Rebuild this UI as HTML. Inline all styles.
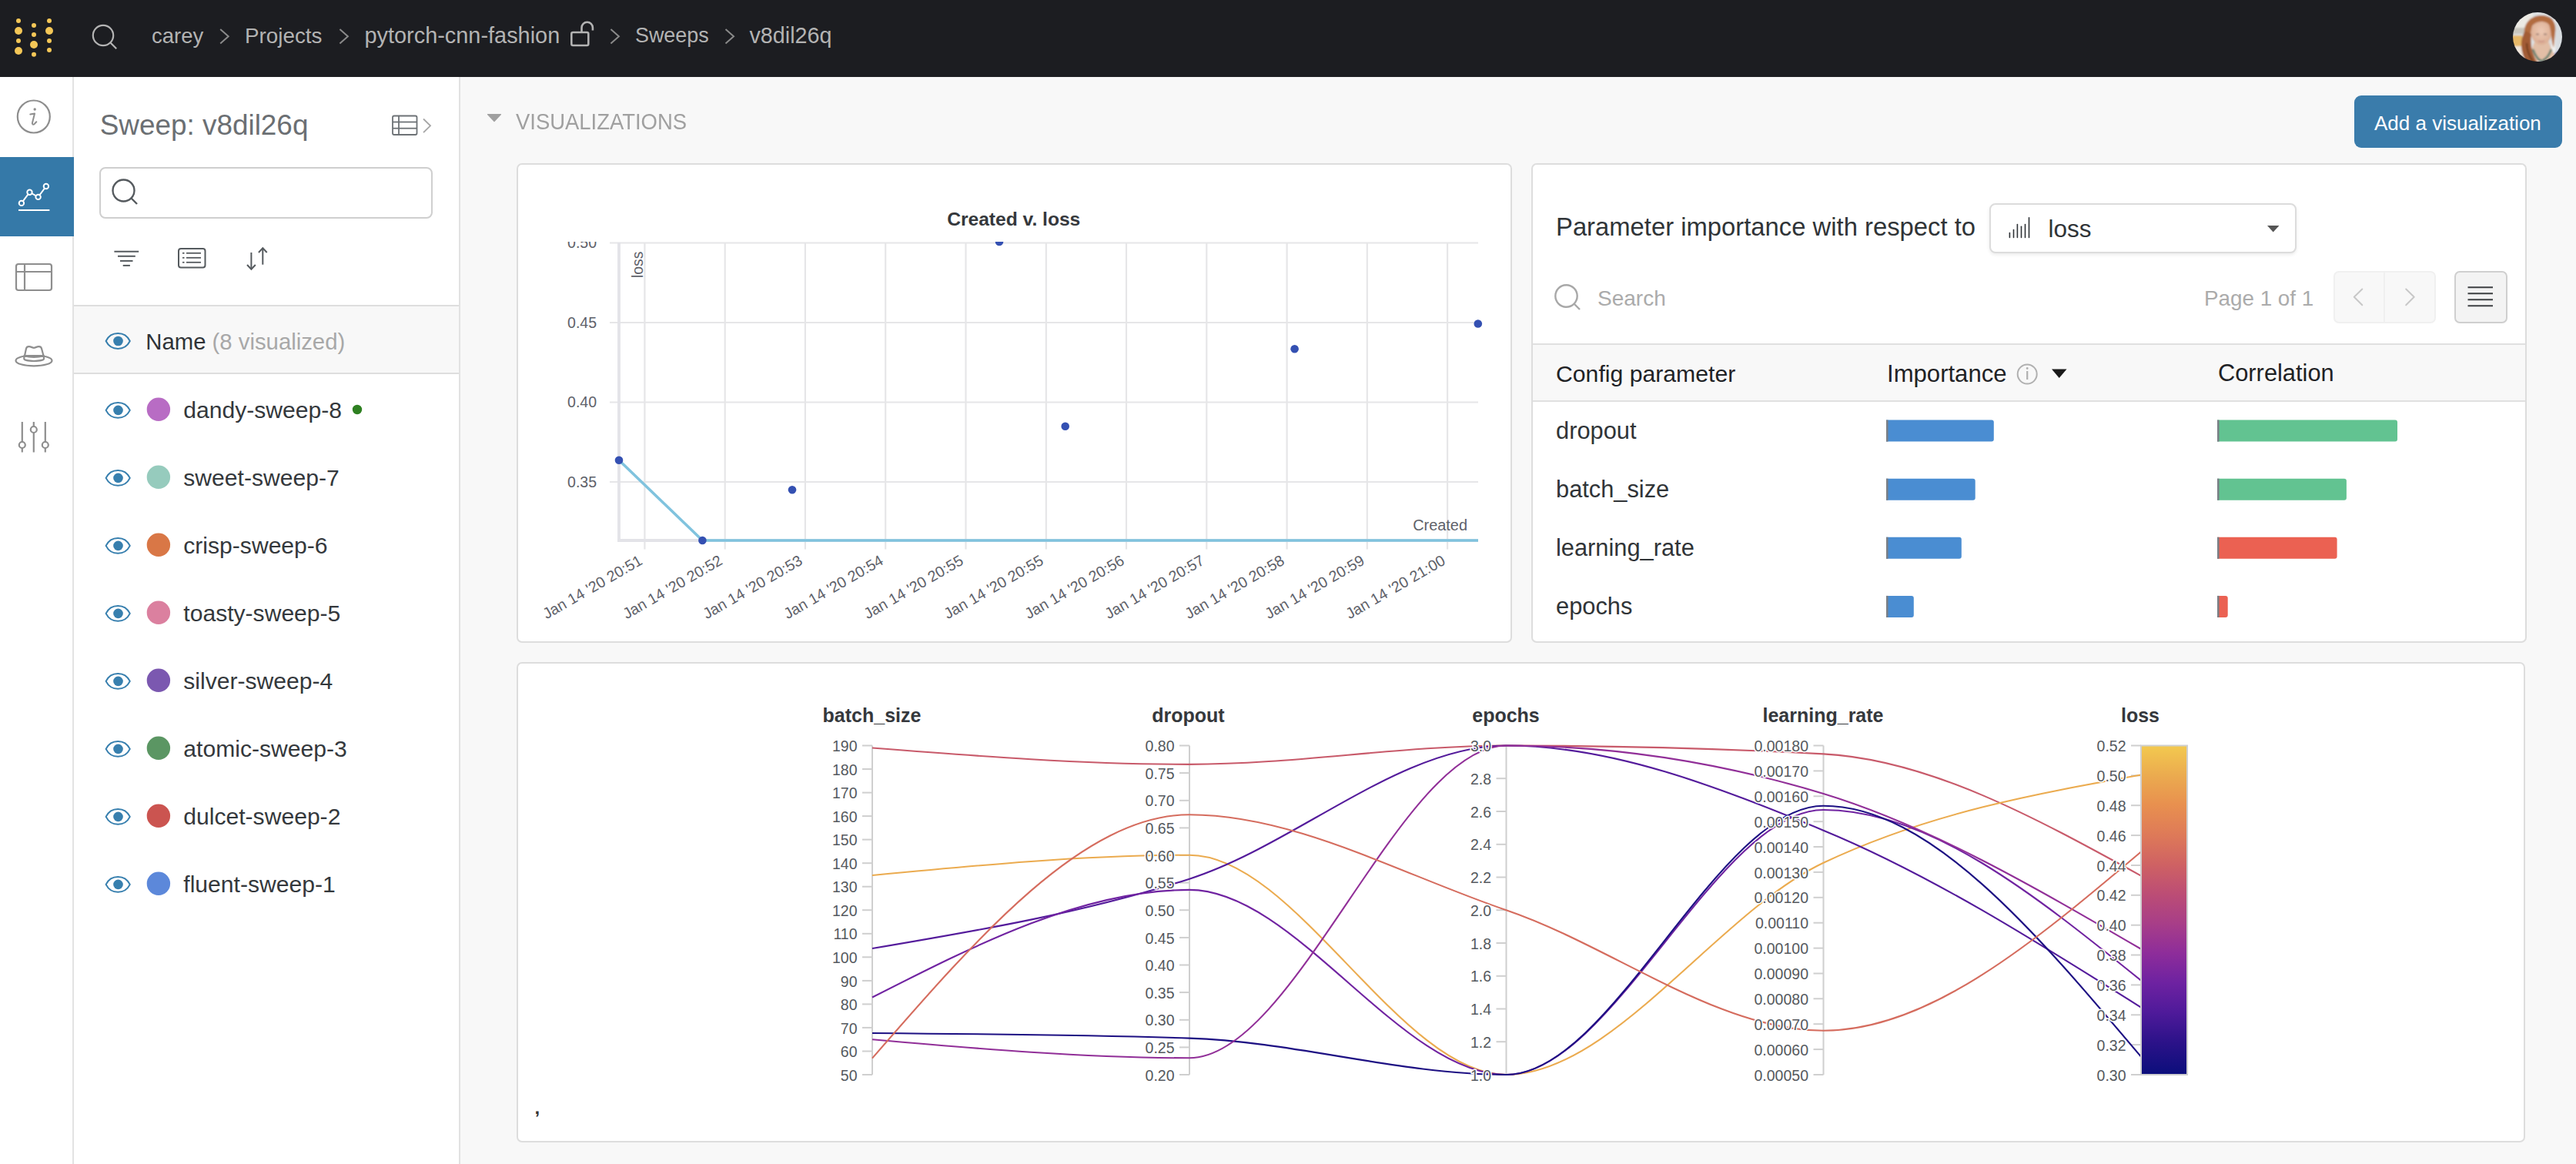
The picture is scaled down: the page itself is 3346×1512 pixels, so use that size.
<!DOCTYPE html><html><head><meta charset="utf-8"><title>Sweep v8dil26q</title><style>
html,body{margin:0;padding:0;}
body{width:3346px;height:1512px;position:relative;overflow:hidden;background:#f8f8f8;font-family:"Liberation Sans", sans-serif;}
.t{position:absolute;white-space:nowrap;line-height:1;}
.r{position:absolute;box-sizing:border-box;}
svg.r{overflow:visible;}
</style></head><body>
<div class="r" style="left:0px;top:0px;width:3346px;height:100px;background:#1c1d21;"></div>
<svg class="r" style="left:0px;top:0px;" width="100" height="100" viewBox="0 0 100 100"><circle cx="24" cy="27" r="3" fill="#f4c757"/><circle cx="24" cy="40" r="5" fill="#f4c757"/><circle cx="24" cy="53" r="3" fill="#f4c757"/><circle cx="24" cy="66" r="5" fill="#f4c757"/><circle cx="44" cy="33" r="3" fill="#f4c757"/><circle cx="44" cy="45" r="3" fill="#f4c757"/><circle cx="44" cy="58" r="5" fill="#f4c757"/><circle cx="44" cy="70.8" r="3" fill="#f4c757"/><circle cx="64" cy="27" r="3" fill="#f4c757"/><circle cx="64" cy="40" r="5" fill="#f4c757"/><circle cx="64" cy="53" r="3" fill="#f4c757"/><circle cx="64" cy="65" r="3" fill="#f4c757"/></svg>
<svg class="r" style="left:110px;top:20px;" width="60" height="60" viewBox="110 20 60 60"><circle cx="134" cy="46" r="13.2" fill="none" stroke="#b4b4b4" stroke-width="2.2"/><line x1="143.5" y1="55.5" x2="151.2" y2="63.2" stroke="#b4b4b4" stroke-width="2.2"/></svg>
<div class="t" style="left:197.0px;top:32.7px;font-size:27.5px;color:#b3b3b3;font-weight:normal;">carey</div>
<div class="t" style="left:318.0px;top:32.5px;font-size:27.8px;color:#b3b3b3;font-weight:normal;">Projects</div>
<div class="t" style="left:473.5px;top:31.5px;font-size:28.9px;color:#b3b3b3;font-weight:normal;">pytorch-cnn-fashion</div>
<div class="t" style="left:825.0px;top:33.2px;font-size:26.9px;color:#b3b3b3;font-weight:normal;">Sweeps</div>
<div class="t" style="left:973.5px;top:31.7px;font-size:28.7px;color:#b3b3b3;font-weight:normal;">v8dil26q</div>
<svg class="r" style="left:0px;top:0px;" width="1100" height="100" viewBox="0 0 1100 100"><polyline points="286.2,38 296.7,47.3 286.2,56.6" fill="none" stroke="#8a8a8a" stroke-width="2"/><polyline points="441.4,38 451.9,47.3 441.4,56.6" fill="none" stroke="#8a8a8a" stroke-width="2"/><polyline points="793.4,38 803.9,47.3 793.4,56.6" fill="none" stroke="#8a8a8a" stroke-width="2"/><polyline points="942.5,38 953.0,47.3 942.5,56.6" fill="none" stroke="#8a8a8a" stroke-width="2"/></svg>
<svg class="r" style="left:730px;top:20px;" width="50" height="50" viewBox="730 20 50 50"><rect x="742.3" y="42" width="22" height="17" rx="2" fill="none" stroke="#b3b3b3" stroke-width="2.6"/><path d="M755.5,42 V36 A7.2,7.2 0 0 1 769.9,36 V39.5" fill="none" stroke="#b3b3b3" stroke-width="2.6"/></svg>
<svg class="r" style="left:3264px;top:16px" width="64" height="64" viewBox="0 0 64 64">
<defs><clipPath id="av"><circle cx="32" cy="32" r="32"/></clipPath>
<filter id="bl" x="-10%" y="-10%" width="120%" height="120%"><feGaussianBlur stdDeviation="1.1"/></filter>
<radialGradient id="face" cx="0.5" cy="0.45" r="0.55"><stop offset="0" stop-color="#ecc9b4"/><stop offset="1" stop-color="#dcae94"/></radialGradient></defs>
<g clip-path="url(#av)"><g filter="url(#bl)">
<rect x="-4" y="-4" width="72" height="72" fill="#dfe2e4"/>
<rect x="-4" y="-4" width="30" height="30" fill="#eceae4"/>
<rect x="-4" y="20" width="20" height="8" fill="#c9c6bd"/>
<rect x="-4" y="30" width="16" height="18" fill="#e6b868"/>
<rect x="-4" y="44" width="20" height="24" fill="#efe6dc"/>
<rect x="48" y="-4" width="20" height="72" fill="#d9dde0"/>
<rect x="50" y="10" width="5" height="50" fill="#f2f2f0"/>
<path d="M20,64 C24,52 26,40 30,36 L46,36 C48,44 52,52 60,64 Z" fill="#e2bea6"/>
<path d="M54,54 L64,46 L64,64 L54,64 Z" fill="#2a3a9a"/>
<path d="M18,56 L24,64 L16,64 Z" fill="#2a3a9a"/>
<ellipse cx="37" cy="26" rx="13.5" ry="16" fill="url(#face)"/>
<path d="M15,30 C13,14 24,4 37,4 C50,4 57,12 55,26 L53,46 C50,40 50,22 47,16 C42,10 30,11 25,18 C23,24 23,30 23,36 Z" fill="#b26c40"/>
<path d="M16,24 C8,36 10,52 18,66 L32,66 C26,56 22,44 24,28 Z" fill="#a25c34"/>
<path d="M18,40 C18,50 22,58 26,64" fill="none" stroke="#6e3a1e" stroke-width="2"/>
<path d="M26,48 C29,56 33,62 37,63 C42,62 47,56 50,48" fill="none" stroke="#5e7e6e" stroke-width="2.6"/>
<path d="M30,28.5 L34,28.5 M40,28.5 L44,28.5" stroke="#8a7068" stroke-width="1.3"/>
<path d="M33,37 C35,38.5 39,38.5 41,37" fill="none" stroke="#c48a80" stroke-width="1.2"/>
</g></g></svg>
<div class="r" style="left:0px;top:100px;width:96px;height:1412px;background:#fff;border-right:2px solid #e2e2e2;"></div>
<div class="r" style="left:0px;top:204px;width:96px;height:103px;background:#3579a8;"></div>
<svg class="r" style="left:0px;top:100px;" width="96" height="600" viewBox="0 100 96 600">
<circle cx="43.8" cy="151.5" r="21" fill="none" stroke="#8e8e8e" stroke-width="2.2"/>
<circle cx="45.2" cy="142" r="1.7" fill="#8e8e8e"/>
<path d="M39.3,148.6 L45,147.4 L42,159.5 C41.4,162 43.2,162.3 44.8,160.9 L47.3,158.2" fill="none" stroke="#8e8e8e" stroke-width="2" stroke-linejoin="round" stroke-linecap="round"/>
<polyline points="27.9,263.9 38.5,249.7 49.6,255.9 59.9,242" fill="none" stroke="#fff" stroke-width="2"/>
<circle cx="27.9" cy="263.9" r="3.2" fill="#3579a8" stroke="#fff" stroke-width="2"/>
<circle cx="38.5" cy="249.7" r="3.2" fill="#3579a8" stroke="#fff" stroke-width="2"/>
<circle cx="49.6" cy="255.9" r="3.2" fill="#3579a8" stroke="#fff" stroke-width="2"/>
<circle cx="59.9" cy="242" r="3.2" fill="#3579a8" stroke="#fff" stroke-width="2"/>
<line x1="24" y1="273" x2="64.4" y2="273" stroke="#fff" stroke-width="2.2"/>
<rect x="21" y="343" width="46" height="34" rx="3" fill="none" stroke="#8e8e8e" stroke-width="2.2"/>
<line x1="21" y1="353" x2="67" y2="353" stroke="#8e8e8e" stroke-width="2.2"/>
<line x1="32" y1="343" x2="32" y2="377" stroke="#8e8e8e" stroke-width="2.2"/>
<ellipse cx="44" cy="468.4" rx="23.5" ry="6.9" fill="none" stroke="#8e8e8e" stroke-width="2.2"/>
<path d="M32,462 L34,452.8 C34.5,450.8 35.5,450.2 37.5,450.2 C40.5,450.2 42,451.8 44,451.8 C46,451.8 47.5,450.2 50.5,450.2 C52.5,450.2 53.5,450.8 54,452.8 L56.5,462 Z" fill="#fff" stroke="#8e8e8e" stroke-width="2.2" stroke-linejoin="round"/>
<path d="M31.3,462.3 C39,464.3 49,464.3 57,462.3 L57,466 C57,467.8 50,469 44,469 C38,469 31.3,467.8 31.3,466 Z" fill="#fff" stroke="#8e8e8e" stroke-width="2.2" stroke-linejoin="round"/>
<line x1="28.8" y1="548" x2="28.8" y2="574" stroke="#8e8e8e" stroke-width="2.2"/>
<line x1="28.8" y1="582" x2="28.8" y2="587.5" stroke="#8e8e8e" stroke-width="2.2"/>
<circle cx="28.8" cy="578" r="4" fill="none" stroke="#8e8e8e" stroke-width="2.2"/>
<line x1="43.8" y1="548" x2="43.8" y2="554" stroke="#8e8e8e" stroke-width="2.2"/>
<line x1="43.8" y1="562" x2="43.8" y2="587.5" stroke="#8e8e8e" stroke-width="2.2"/>
<circle cx="43.8" cy="558" r="4" fill="none" stroke="#8e8e8e" stroke-width="2.2"/>
<line x1="58.8" y1="548" x2="58.8" y2="574" stroke="#8e8e8e" stroke-width="2.2"/>
<line x1="58.8" y1="582" x2="58.8" y2="587.5" stroke="#8e8e8e" stroke-width="2.2"/>
<circle cx="58.8" cy="578" r="4" fill="none" stroke="#8e8e8e" stroke-width="2.2"/>
</svg>
<div class="r" style="left:96px;top:100px;width:502px;height:1412px;background:#fff;border-right:2px solid #e2e2e2;"></div>
<div class="t" style="left:129.7px;top:145.3px;font-size:36.9px;color:#6b6f73;font-weight:normal;">Sweep: v8dil26q</div>
<svg class="r" style="left:500px;top:140px;" width="70" height="45" viewBox="500 140 70 45">
<rect x="510" y="150.5" width="31.5" height="24.5" rx="2" fill="none" stroke="#6d7276" stroke-width="1.8"/>
<line x1="510" y1="158.5" x2="541.5" y2="158.5" stroke="#6d7276" stroke-width="1.8"/>
<line x1="510" y1="166.7" x2="541.5" y2="166.7" stroke="#6d7276" stroke-width="1.8"/>
<line x1="518" y1="150.5" x2="518" y2="175" stroke="#6d7276" stroke-width="1.8"/>
<polyline points="550,154.5 559,163.3 550,172.1" fill="none" stroke="#a5a5a5" stroke-width="1.8"/>
</svg>
<div class="r" style="left:129px;top:217px;width:433px;height:67px;background:#fff;border:2.5px solid #cfcfcf;border-radius:8px;"></div>
<svg class="r" style="left:130px;top:220px;" width="420" height="140" viewBox="130 220 420 140">
<circle cx="160.5" cy="247.5" r="14" fill="none" stroke="#555a5e" stroke-width="2.4"/>
<line x1="170.5" y1="257.5" x2="178" y2="265" stroke="#555a5e" stroke-width="2.4"/>
<line x1="148.4" y1="326.8" x2="180.2" y2="326.8" stroke="#555a5e" stroke-width="2"/>
<line x1="153" y1="332.8" x2="175.8" y2="332.8" stroke="#555a5e" stroke-width="2"/>
<line x1="156" y1="338.9" x2="172.5" y2="338.9" stroke="#555a5e" stroke-width="2"/>
<line x1="159.7" y1="344.9" x2="168.9" y2="344.9" stroke="#555a5e" stroke-width="2"/>
<rect x="232" y="323" width="34.5" height="24.5" rx="3" fill="none" stroke="#555a5e" stroke-width="2"/>
<line x1="237" y1="328.8" x2="239.5" y2="328.8" stroke="#555a5e" stroke-width="1.8"/>
<line x1="242" y1="328.8" x2="261" y2="328.8" stroke="#555a5e" stroke-width="1.8"/>
<line x1="237" y1="334.8" x2="239.5" y2="334.8" stroke="#555a5e" stroke-width="1.8"/>
<line x1="242" y1="334.8" x2="261" y2="334.8" stroke="#555a5e" stroke-width="1.8"/>
<line x1="237" y1="340.8" x2="239.5" y2="340.8" stroke="#555a5e" stroke-width="1.8"/>
<line x1="242" y1="340.8" x2="261" y2="340.8" stroke="#555a5e" stroke-width="1.8"/>
<line x1="326.4" y1="328" x2="326.4" y2="349.5" stroke="#555a5e" stroke-width="2"/>
<polyline points="321,344 326.4,349.7 331.8,344" fill="none" stroke="#555a5e" stroke-width="2"/>
<line x1="341.3" y1="322.3" x2="341.3" y2="343.7" stroke="#555a5e" stroke-width="2"/>
<polyline points="335.9,328 341.3,322.3 346.7,328" fill="none" stroke="#555a5e" stroke-width="2"/>
</svg>
<div class="r" style="left:96px;top:396px;width:500px;height:90px;background:#f8f8f8;border-top:2px solid #dedede;border-bottom:2px solid #dedede;"></div>
<div class="t" style="left:238.3px;top:518.3px;font-size:30.1px;color:#34383c;font-weight:normal;">dandy-sweep-8</div>
<div class="t" style="left:238.3px;top:606.3px;font-size:30.1px;color:#34383c;font-weight:normal;">sweet-sweep-7</div>
<div class="t" style="left:238.3px;top:694.3px;font-size:30.1px;color:#34383c;font-weight:normal;">crisp-sweep-6</div>
<div class="t" style="left:238.3px;top:782.3px;font-size:30.1px;color:#34383c;font-weight:normal;">toasty-sweep-5</div>
<div class="t" style="left:238.3px;top:870.3px;font-size:30.1px;color:#34383c;font-weight:normal;">silver-sweep-4</div>
<div class="t" style="left:238.3px;top:958.3px;font-size:30.1px;color:#34383c;font-weight:normal;">atomic-sweep-3</div>
<div class="t" style="left:238.3px;top:1046.3px;font-size:30.1px;color:#34383c;font-weight:normal;">dulcet-sweep-2</div>
<div class="t" style="left:238.3px;top:1134.3px;font-size:30.1px;color:#34383c;font-weight:normal;">fluent-sweep-1</div>
<svg class="r" style="left:96px;top:400px;" width="500" height="800" viewBox="96 400 500 800"><path d="M137.6,443 C144.2,429.8 162.2,429.8 168.79999999999998,443 C162.2,456.2 144.2,456.2 137.6,443 Z" fill="none" stroke="#377fae" stroke-width="2" stroke-linejoin="round"/><circle cx="153.5" cy="443" r="6.3" fill="#377fae"/><path d="M137.6,532.9 C144.2,519.6999999999999 162.2,519.6999999999999 168.79999999999998,532.9 C162.2,546.1 144.2,546.1 137.6,532.9 Z" fill="none" stroke="#377fae" stroke-width="2" stroke-linejoin="round"/><circle cx="153.5" cy="532.9" r="6.3" fill="#377fae"/><path d="M137.6,620.9 C144.2,607.6999999999999 162.2,607.6999999999999 168.79999999999998,620.9 C162.2,634.1 144.2,634.1 137.6,620.9 Z" fill="none" stroke="#377fae" stroke-width="2" stroke-linejoin="round"/><circle cx="153.5" cy="620.9" r="6.3" fill="#377fae"/><path d="M137.6,708.9 C144.2,695.6999999999999 162.2,695.6999999999999 168.79999999999998,708.9 C162.2,722.1 144.2,722.1 137.6,708.9 Z" fill="none" stroke="#377fae" stroke-width="2" stroke-linejoin="round"/><circle cx="153.5" cy="708.9" r="6.3" fill="#377fae"/><path d="M137.6,796.9 C144.2,783.6999999999999 162.2,783.6999999999999 168.79999999999998,796.9 C162.2,810.1 144.2,810.1 137.6,796.9 Z" fill="none" stroke="#377fae" stroke-width="2" stroke-linejoin="round"/><circle cx="153.5" cy="796.9" r="6.3" fill="#377fae"/><path d="M137.6,884.9 C144.2,871.6999999999999 162.2,871.6999999999999 168.79999999999998,884.9 C162.2,898.1 144.2,898.1 137.6,884.9 Z" fill="none" stroke="#377fae" stroke-width="2" stroke-linejoin="round"/><circle cx="153.5" cy="884.9" r="6.3" fill="#377fae"/><path d="M137.6,972.9 C144.2,959.6999999999999 162.2,959.6999999999999 168.79999999999998,972.9 C162.2,986.1 144.2,986.1 137.6,972.9 Z" fill="none" stroke="#377fae" stroke-width="2" stroke-linejoin="round"/><circle cx="153.5" cy="972.9" r="6.3" fill="#377fae"/><path d="M137.6,1060.9 C144.2,1047.7 162.2,1047.7 168.79999999999998,1060.9 C162.2,1074.1000000000001 144.2,1074.1000000000001 137.6,1060.9 Z" fill="none" stroke="#377fae" stroke-width="2" stroke-linejoin="round"/><circle cx="153.5" cy="1060.9" r="6.3" fill="#377fae"/><path d="M137.6,1148.9 C144.2,1135.7 162.2,1135.7 168.79999999999998,1148.9 C162.2,1162.1000000000001 144.2,1162.1000000000001 137.6,1148.9 Z" fill="none" stroke="#377fae" stroke-width="2" stroke-linejoin="round"/><circle cx="153.5" cy="1148.9" r="6.3" fill="#377fae"/><circle cx="205.9" cy="531.7" r="15.2" fill="#b86cc4"/><circle cx="205.9" cy="619.7" r="15.2" fill="#96cbbd"/><circle cx="205.9" cy="707.7" r="15.2" fill="#d97746"/><circle cx="205.9" cy="795.7" r="15.2" fill="#db809f"/><circle cx="205.9" cy="883.7" r="15.2" fill="#7b58b0"/><circle cx="205.9" cy="971.7" r="15.2" fill="#5b9663"/><circle cx="205.9" cy="1059.7" r="15.2" fill="#cb5450"/><circle cx="205.9" cy="1147.7" r="15.2" fill="#5c88da"/><circle cx="464" cy="532" r="6.2" fill="#2e8021"/></svg>
<div class="t" style="left:189.3px;top:429.2px;font-size:29.3px;color:#2f3337;font-weight:normal;">Name <span style="color:#a8a8a8">(8 visualized)</span></div>
<svg class="r" style="left:620px;top:140px;" width="40" height="30" viewBox="620 140 40 30"><polygon points="633.5,148.5 650.5,148.5 642,157.5" fill="#a0a0a0" stroke="#a0a0a0" stroke-width="1.2" stroke-linejoin="round"/></svg>
<div class="t" style="left:670.0px;top:144.3px;font-size:29.2px;color:#a0a0a0;font-weight:normal;transform:scaleX(0.94);transform-origin:0 0;">VISUALIZATIONS</div>
<div class="r" style="left:3058px;top:124px;width:270px;height:68px;background:#3a7cab;border-radius:9px;"></div>
<div class="t" style="left:3084.0px;top:146.7px;font-size:26.0px;color:#ffffff;font-weight:normal;">Add a visualization</div>
<div class="r" style="left:671px;top:212px;width:1293px;height:623px;background:#fff;border:2px solid #dddddd;border-radius:7px;"></div>
<div class="r" style="left:1989px;top:212px;width:1293px;height:623px;background:#fff;border:2px solid #dddddd;border-radius:7px;"></div>
<div class="r" style="left:671px;top:860px;width:2609px;height:624px;background:#fff;border:2px solid #dddddd;border-radius:7px;"></div>
<div class="t" style="left:-183.3px;width:3000px;text-align:center;top:273.2px;font-size:24.6px;color:#35383c;font-weight:bold;">Created v. loss</div>
<svg class="r" style="left:700px;top:300px;" width="1250" height="520" viewBox="700 300 1250 520"><line x1="792" y1="315.5" x2="1920" y2="315.5" stroke="#e6e6e8" stroke-width="2.2"/><line x1="792" y1="419" x2="1920" y2="419" stroke="#e6e6e8" stroke-width="2.2"/><line x1="792" y1="522.5" x2="1920" y2="522.5" stroke="#e6e6e8" stroke-width="2.2"/><line x1="792" y1="626" x2="1920" y2="626" stroke="#e6e6e8" stroke-width="2.2"/><line x1="837.4" y1="315" x2="837.4" y2="713.5" stroke="#e6e6e8" stroke-width="2.2"/><line x1="941.7" y1="315" x2="941.7" y2="713.5" stroke="#e6e6e8" stroke-width="2.2"/><line x1="1045.9" y1="315" x2="1045.9" y2="713.5" stroke="#e6e6e8" stroke-width="2.2"/><line x1="1150.2" y1="315" x2="1150.2" y2="713.5" stroke="#e6e6e8" stroke-width="2.2"/><line x1="1254.5" y1="315" x2="1254.5" y2="713.5" stroke="#e6e6e8" stroke-width="2.2"/><line x1="1358.8" y1="315" x2="1358.8" y2="713.5" stroke="#e6e6e8" stroke-width="2.2"/><line x1="1463.0" y1="315" x2="1463.0" y2="713.5" stroke="#e6e6e8" stroke-width="2.2"/><line x1="1567.3" y1="315" x2="1567.3" y2="713.5" stroke="#e6e6e8" stroke-width="2.2"/><line x1="1671.6" y1="315" x2="1671.6" y2="713.5" stroke="#e6e6e8" stroke-width="2.2"/><line x1="1775.8" y1="315" x2="1775.8" y2="713.5" stroke="#e6e6e8" stroke-width="2.2"/><line x1="1880.1" y1="315" x2="1880.1" y2="713.5" stroke="#e6e6e8" stroke-width="2.2"/><line x1="804" y1="315" x2="804" y2="704" stroke="#e3e3e8" stroke-width="3.8"/><line x1="802" y1="702" x2="1920" y2="702" stroke="#e3e3e8" stroke-width="3.8"/><polyline points="804,597.7 912.4,702 1920,702" fill="none" stroke="#80c3de" stroke-width="3.6" stroke-linejoin="round"/><defs><clipPath id="pclip"><rect x="700" y="314" width="1250" height="500"/></clipPath></defs><g clip-path="url(#pclip)"><circle cx="804" cy="597.7" r="5.3" fill="#3450b2"/><circle cx="912.4" cy="702" r="5.3" fill="#3450b2"/><circle cx="1029" cy="636.2" r="5.3" fill="#3450b2"/><circle cx="1298" cy="314" r="5.3" fill="#3450b2"/><circle cx="1383.7" cy="553.8" r="5.3" fill="#3450b2"/><circle cx="1681.6" cy="453.2" r="5.3" fill="#3450b2"/><circle cx="1919.8" cy="420.5" r="5.3" fill="#3450b2"/></g></svg>
<div class="r" style="left:700px;top:314px;width:90px;height:400px;overflow:hidden;">
<div class="t" style="left:0;width:75px;text-align:right;top:-7.7px;font-size:19.5px;color:#5e6169">0.50</div>
<div class="t" style="left:0;width:75px;text-align:right;top:95.8px;font-size:19.5px;color:#5e6169">0.45</div>
<div class="t" style="left:0;width:75px;text-align:right;top:199.3px;font-size:19.5px;color:#5e6169">0.40</div>
<div class="t" style="left:0;width:75px;text-align:right;top:302.8px;font-size:19.5px;color:#5e6169">0.35</div>
</div>
<div class="t" style="left:820px;top:326px;width:17px;height:35px;"><div class="t" style="left:0;top:35px;font-size:19.3px;color:#5e6169;transform-origin:0 0;transform:rotate(-90deg);"><span style="position:relative;top:-1px">loss</span></div></div>
<div class="t" style="left:-1094.0px;width:3000px;text-align:right;top:673.2px;font-size:19.9px;color:#5e6169;font-weight:normal;">Created</div>
<div class="t" style="left:435.9px;top:715.8px;width:400px;text-align:right;font-size:19.7px;color:#5e6169;transform-origin:400px 16.68px;transform:rotate(-30deg);">Jan 14 '20 20:51</div>
<div class="t" style="left:540.2px;top:715.8px;width:400px;text-align:right;font-size:19.7px;color:#5e6169;transform-origin:400px 16.68px;transform:rotate(-30deg);">Jan 14 '20 20:52</div>
<div class="t" style="left:644.4px;top:715.8px;width:400px;text-align:right;font-size:19.7px;color:#5e6169;transform-origin:400px 16.68px;transform:rotate(-30deg);">Jan 14 '20 20:53</div>
<div class="t" style="left:748.7px;top:715.8px;width:400px;text-align:right;font-size:19.7px;color:#5e6169;transform-origin:400px 16.68px;transform:rotate(-30deg);">Jan 14 '20 20:54</div>
<div class="t" style="left:853.0px;top:715.8px;width:400px;text-align:right;font-size:19.7px;color:#5e6169;transform-origin:400px 16.68px;transform:rotate(-30deg);">Jan 14 '20 20:55</div>
<div class="t" style="left:957.2px;top:715.8px;width:400px;text-align:right;font-size:19.7px;color:#5e6169;transform-origin:400px 16.68px;transform:rotate(-30deg);">Jan 14 '20 20:55</div>
<div class="t" style="left:1061.5px;top:715.8px;width:400px;text-align:right;font-size:19.7px;color:#5e6169;transform-origin:400px 16.68px;transform:rotate(-30deg);">Jan 14 '20 20:56</div>
<div class="t" style="left:1165.8px;top:715.8px;width:400px;text-align:right;font-size:19.7px;color:#5e6169;transform-origin:400px 16.68px;transform:rotate(-30deg);">Jan 14 '20 20:57</div>
<div class="t" style="left:1270.1px;top:715.8px;width:400px;text-align:right;font-size:19.7px;color:#5e6169;transform-origin:400px 16.68px;transform:rotate(-30deg);">Jan 14 '20 20:58</div>
<div class="t" style="left:1374.3px;top:715.8px;width:400px;text-align:right;font-size:19.7px;color:#5e6169;transform-origin:400px 16.68px;transform:rotate(-30deg);">Jan 14 '20 20:59</div>
<div class="t" style="left:1478.6px;top:715.8px;width:400px;text-align:right;font-size:19.7px;color:#5e6169;transform-origin:400px 16.68px;transform:rotate(-30deg);">Jan 14 '20 21:00</div>
<div class="t" style="left:2021.0px;top:278.9px;font-size:32.8px;color:#303437;font-weight:normal;">Parameter importance with respect to</div>
<div class="r" style="left:2584px;top:264px;width:399px;height:65px;background:#fff;border:2px solid #dcdcdc;border-radius:8px;box-shadow:0 2px 4px rgba(0,0,0,0.08);"></div>
<svg class="r" style="left:2600px;top:270px;" width="380" height="50" viewBox="2600 270 380 50"><line x1="2610.4" y1="308.4" x2="2610.4" y2="302.6" stroke="#2f3337" stroke-width="1.6" stroke-linecap="round"/><line x1="2615.5" y1="308.4" x2="2615.5" y2="298.6" stroke="#2f3337" stroke-width="1.6" stroke-linecap="round"/><line x1="2620.4" y1="308.4" x2="2620.4" y2="291.5" stroke="#2f3337" stroke-width="1.6" stroke-linecap="round"/><line x1="2625.5" y1="308.4" x2="2625.5" y2="294.3" stroke="#2f3337" stroke-width="1.6" stroke-linecap="round"/><line x1="2630.5" y1="308.4" x2="2630.5" y2="291.5" stroke="#2f3337" stroke-width="1.6" stroke-linecap="round"/><line x1="2635.5" y1="308.4" x2="2635.5" y2="282.7" stroke="#2f3337" stroke-width="1.6" stroke-linecap="round"/><polygon points="2945,293 2960.5,293 2952.7,301.5" fill="#555"/></svg>
<div class="t" style="left:2660.4px;top:281.8px;font-size:31.5px;color:#303437;font-weight:normal;">loss</div>
<svg class="r" style="left:2010px;top:360px;" width="60" height="50" viewBox="2010 360 60 50"><circle cx="2034.5" cy="384.5" r="14.2" fill="none" stroke="#a8a8a8" stroke-width="2.4"/><line x1="2044.5" y1="394.5" x2="2052" y2="402" stroke="#a8a8a8" stroke-width="2.4"/></svg>
<div class="t" style="left:2075.0px;top:374.3px;font-size:28.0px;color:#ababab;font-weight:normal;">Search</div>
<div class="t" style="left:2863.0px;top:373.5px;font-size:27.8px;color:#ababab;font-weight:normal;">Page 1 of 1</div>
<div class="r" style="left:3031px;top:352px;width:133px;height:68px;background:#f8f8f8;border:2px solid #f0f0f0;border-radius:7px;"></div>
<div class="r" style="left:3096px;top:353px;width:2px;height:66px;background:#f0f0f0;"></div>
<svg class="r" style="left:3040px;top:360px;" width="120" height="50" viewBox="3040 360 120 50"><polyline points="3068.3,375.5 3057.8,385.8 3068.3,396.2" fill="none" stroke="#c8c8c8" stroke-width="2" stroke-linecap="round" stroke-linejoin="round"/><polyline points="3125.2,375.5 3135.7,385.8 3125.2,396.2" fill="none" stroke="#c8c8c8" stroke-width="2" stroke-linecap="round" stroke-linejoin="round"/></svg>
<div class="r" style="left:3188px;top:352px;width:69px;height:68px;background:#f3f3f3;border:2px solid #cfcfcf;border-radius:7px;"></div>
<svg class="r" style="left:3195px;top:365px;" width="50" height="40" viewBox="3195 365 50 40"><line x1="3205.5" y1="373.2" x2="3238" y2="373.2" stroke="#3c3f42" stroke-width="2"/><line x1="3205.5" y1="381.2" x2="3238" y2="381.2" stroke="#3c3f42" stroke-width="2"/><line x1="3205.5" y1="389.2" x2="3238" y2="389.2" stroke="#3c3f42" stroke-width="2"/><line x1="3205.5" y1="397.2" x2="3238" y2="397.2" stroke="#3c3f42" stroke-width="2"/></svg>
<div class="r" style="left:1991px;top:446px;width:1289px;height:76px;background:#f8f8f8;border-top:2px solid #e0e0e0;border-bottom:2px solid #e0e0e0;"></div>
<div class="t" style="left:2021.0px;top:470.7px;font-size:30.2px;color:#1f2225;font-weight:normal;">Config parameter</div>
<div class="t" style="left:2451.0px;top:470.0px;font-size:31.1px;color:#1f2225;font-weight:normal;">Importance</div>
<svg class="r" style="left:2615px;top:470px;" width="80" height="35" viewBox="2615 470 80 35"><circle cx="2633.2" cy="486" r="12.5" fill="none" stroke="#b0b0b0" stroke-width="2"/><line x1="2633.2" y1="482" x2="2633.2" y2="493" stroke="#b0b0b0" stroke-width="2.2"/><circle cx="2633.2" cy="478.5" r="1.4" fill="#b0b0b0"/><polygon points="2665,479.5 2684.5,479.5 2674.7,491" fill="#1a1a1a"/></svg>
<div class="t" style="left:2881.0px;top:470.2px;font-size:30.8px;color:#1f2225;font-weight:normal;">Correlation</div>
<div class="t" style="left:2021.0px;top:545.1px;font-size:30.8px;color:#303437;font-weight:normal;">dropout</div>
<div class="t" style="left:2021.0px;top:621.2px;font-size:30.8px;color:#303437;font-weight:normal;">batch_size</div>
<div class="t" style="left:2021.0px;top:697.3px;font-size:30.8px;color:#303437;font-weight:normal;">learning_rate</div>
<div class="t" style="left:2021.0px;top:773.4px;font-size:30.8px;color:#303437;font-weight:normal;">epochs</div>
<svg class="r" style="left:2440px;top:540px;" width="700" height="270" viewBox="2440 540 700 270"><path d="M2450,545.6 H2586.8 Q2589.8,545.6 2589.8,548.6 V570.6 Q2589.8,573.6 2586.8,573.6 H2450 Z" fill="#4a8dd2"/><rect x="2450" y="545.6" width="2.5" height="28" fill="#7a7f86"/><path d="M2880,545.6 H3111 Q3114,545.6 3114,548.6 V570.6 Q3114,573.6 3111,573.6 H2880 Z" fill="#62c391"/><rect x="2880" y="545.6" width="2.5" height="28" fill="#7a7f86"/><path d="M2450,621.7 H2562.7 Q2565.7,621.7 2565.7,624.7 V646.7 Q2565.7,649.7 2562.7,649.7 H2450 Z" fill="#4a8dd2"/><rect x="2450" y="621.7" width="2.5" height="28" fill="#7a7f86"/><path d="M2880,621.7 H3044.9 Q3047.9,621.7 3047.9,624.7 V646.7 Q3047.9,649.7 3044.9,649.7 H2880 Z" fill="#62c391"/><rect x="2880" y="621.7" width="2.5" height="28" fill="#7a7f86"/><path d="M2450,697.8 H2544.8 Q2547.8,697.8 2547.8,700.8 V722.8 Q2547.8,725.8 2544.8,725.8 H2450 Z" fill="#4a8dd2"/><rect x="2450" y="697.8" width="2.5" height="28" fill="#7a7f86"/><path d="M2880,697.8 H3032.6 Q3035.6,697.8 3035.6,700.8 V722.8 Q3035.6,725.8 3032.6,725.8 H2880 Z" fill="#eb6152"/><rect x="2880" y="697.8" width="2.5" height="28" fill="#7a7f86"/><path d="M2450,773.9 H2482.8 Q2485.8,773.9 2485.8,776.9 V798.9 Q2485.8,801.9 2482.8,801.9 H2450 Z" fill="#4a8dd2"/><rect x="2450" y="773.9" width="2.5" height="28" fill="#7a7f86"/><path d="M2880,773.9 H2890.7 Q2893.7,773.9 2893.7,776.9 V798.9 Q2893.7,801.9 2890.7,801.9 H2880 Z" fill="#eb6152"/><rect x="2880" y="773.9" width="2.5" height="28" fill="#7a7f86"/></svg>
<svg class="r" style="left:1000px;top:940px;" width="1900" height="480" viewBox="1000 940 1900 480"><defs><linearGradient id="cb" x1="0" y1="0" x2="0" y2="1"><stop offset="0" stop-color="#f3c94f"/><stop offset="0.09" stop-color="#ebab4f"/><stop offset="0.18" stop-color="#e8904f"/><stop offset="0.27" stop-color="#de7a58"/><stop offset="0.36" stop-color="#cf6263"/><stop offset="0.45" stop-color="#bc4d75"/><stop offset="0.54" stop-color="#a83e88"/><stop offset="0.63" stop-color="#8e2d9a"/><stop offset="0.72" stop-color="#6e22a1"/><stop offset="0.81" stop-color="#4f1a9a"/><stop offset="0.9" stop-color="#2c1289"/><stop offset="1" stop-color="#0b0e7b"/></linearGradient></defs><line x1="1120" y1="1396.0" x2="1133" y2="1396.0" stroke="#cfcfcf" stroke-width="2"/><line x1="1120" y1="1365.5" x2="1133" y2="1365.5" stroke="#cfcfcf" stroke-width="2"/><line x1="1120" y1="1334.9" x2="1133" y2="1334.9" stroke="#cfcfcf" stroke-width="2"/><line x1="1120" y1="1304.4" x2="1133" y2="1304.4" stroke="#cfcfcf" stroke-width="2"/><line x1="1120" y1="1273.9" x2="1133" y2="1273.9" stroke="#cfcfcf" stroke-width="2"/><line x1="1120" y1="1243.3" x2="1133" y2="1243.3" stroke="#cfcfcf" stroke-width="2"/><line x1="1120" y1="1212.8" x2="1133" y2="1212.8" stroke="#cfcfcf" stroke-width="2"/><line x1="1120" y1="1182.2" x2="1133" y2="1182.2" stroke="#cfcfcf" stroke-width="2"/><line x1="1120" y1="1151.7" x2="1133" y2="1151.7" stroke="#cfcfcf" stroke-width="2"/><line x1="1120" y1="1121.2" x2="1133" y2="1121.2" stroke="#cfcfcf" stroke-width="2"/><line x1="1120" y1="1090.6" x2="1133" y2="1090.6" stroke="#cfcfcf" stroke-width="2"/><line x1="1120" y1="1060.1" x2="1133" y2="1060.1" stroke="#cfcfcf" stroke-width="2"/><line x1="1120" y1="1029.6" x2="1133" y2="1029.6" stroke="#cfcfcf" stroke-width="2"/><line x1="1120" y1="999.0" x2="1133" y2="999.0" stroke="#cfcfcf" stroke-width="2"/><line x1="1120" y1="968.5" x2="1133" y2="968.5" stroke="#cfcfcf" stroke-width="2"/><line x1="1133" y1="968.5" x2="1133" y2="1396" stroke="#cfcfcf" stroke-width="2"/><line x1="1532" y1="1396.0" x2="1545" y2="1396.0" stroke="#cfcfcf" stroke-width="2"/><line x1="1532" y1="1360.4" x2="1545" y2="1360.4" stroke="#cfcfcf" stroke-width="2"/><line x1="1532" y1="1324.8" x2="1545" y2="1324.8" stroke="#cfcfcf" stroke-width="2"/><line x1="1532" y1="1289.1" x2="1545" y2="1289.1" stroke="#cfcfcf" stroke-width="2"/><line x1="1532" y1="1253.5" x2="1545" y2="1253.5" stroke="#cfcfcf" stroke-width="2"/><line x1="1532" y1="1217.9" x2="1545" y2="1217.9" stroke="#cfcfcf" stroke-width="2"/><line x1="1532" y1="1182.2" x2="1545" y2="1182.2" stroke="#cfcfcf" stroke-width="2"/><line x1="1532" y1="1146.6" x2="1545" y2="1146.6" stroke="#cfcfcf" stroke-width="2"/><line x1="1532" y1="1111.0" x2="1545" y2="1111.0" stroke="#cfcfcf" stroke-width="2"/><line x1="1532" y1="1075.4" x2="1545" y2="1075.4" stroke="#cfcfcf" stroke-width="2"/><line x1="1532" y1="1039.8" x2="1545" y2="1039.8" stroke="#cfcfcf" stroke-width="2"/><line x1="1532" y1="1004.1" x2="1545" y2="1004.1" stroke="#cfcfcf" stroke-width="2"/><line x1="1532" y1="968.5" x2="1545" y2="968.5" stroke="#cfcfcf" stroke-width="2"/><line x1="1545" y1="968.5" x2="1545" y2="1396" stroke="#cfcfcf" stroke-width="2"/><line x1="1943.5" y1="1396.0" x2="1956.5" y2="1396.0" stroke="#cfcfcf" stroke-width="2"/><line x1="1943.5" y1="1353.2" x2="1956.5" y2="1353.2" stroke="#cfcfcf" stroke-width="2"/><line x1="1943.5" y1="1310.5" x2="1956.5" y2="1310.5" stroke="#cfcfcf" stroke-width="2"/><line x1="1943.5" y1="1267.8" x2="1956.5" y2="1267.8" stroke="#cfcfcf" stroke-width="2"/><line x1="1943.5" y1="1225.0" x2="1956.5" y2="1225.0" stroke="#cfcfcf" stroke-width="2"/><line x1="1943.5" y1="1182.2" x2="1956.5" y2="1182.2" stroke="#cfcfcf" stroke-width="2"/><line x1="1943.5" y1="1139.5" x2="1956.5" y2="1139.5" stroke="#cfcfcf" stroke-width="2"/><line x1="1943.5" y1="1096.8" x2="1956.5" y2="1096.8" stroke="#cfcfcf" stroke-width="2"/><line x1="1943.5" y1="1054.0" x2="1956.5" y2="1054.0" stroke="#cfcfcf" stroke-width="2"/><line x1="1943.5" y1="1011.2" x2="1956.5" y2="1011.2" stroke="#cfcfcf" stroke-width="2"/><line x1="1943.5" y1="968.5" x2="1956.5" y2="968.5" stroke="#cfcfcf" stroke-width="2"/><line x1="1956.5" y1="968.5" x2="1956.5" y2="1396" stroke="#cfcfcf" stroke-width="2"/><line x1="2355.5" y1="1396.0" x2="2368.5" y2="1396.0" stroke="#cfcfcf" stroke-width="2"/><line x1="2355.5" y1="1363.1" x2="2368.5" y2="1363.1" stroke="#cfcfcf" stroke-width="2"/><line x1="2355.5" y1="1330.2" x2="2368.5" y2="1330.2" stroke="#cfcfcf" stroke-width="2"/><line x1="2355.5" y1="1297.3" x2="2368.5" y2="1297.3" stroke="#cfcfcf" stroke-width="2"/><line x1="2355.5" y1="1264.5" x2="2368.5" y2="1264.5" stroke="#cfcfcf" stroke-width="2"/><line x1="2355.5" y1="1231.6" x2="2368.5" y2="1231.6" stroke="#cfcfcf" stroke-width="2"/><line x1="2355.5" y1="1198.7" x2="2368.5" y2="1198.7" stroke="#cfcfcf" stroke-width="2"/><line x1="2355.5" y1="1165.8" x2="2368.5" y2="1165.8" stroke="#cfcfcf" stroke-width="2"/><line x1="2355.5" y1="1132.9" x2="2368.5" y2="1132.9" stroke="#cfcfcf" stroke-width="2"/><line x1="2355.5" y1="1100.0" x2="2368.5" y2="1100.0" stroke="#cfcfcf" stroke-width="2"/><line x1="2355.5" y1="1067.2" x2="2368.5" y2="1067.2" stroke="#cfcfcf" stroke-width="2"/><line x1="2355.5" y1="1034.3" x2="2368.5" y2="1034.3" stroke="#cfcfcf" stroke-width="2"/><line x1="2355.5" y1="1001.4" x2="2368.5" y2="1001.4" stroke="#cfcfcf" stroke-width="2"/><line x1="2355.5" y1="968.5" x2="2368.5" y2="968.5" stroke="#cfcfcf" stroke-width="2"/><line x1="2368.5" y1="968.5" x2="2368.5" y2="1396" stroke="#cfcfcf" stroke-width="2"/><line x1="2768" y1="1396.0" x2="2781" y2="1396.0" stroke="#cfcfcf" stroke-width="2"/><line x1="2768" y1="1357.1" x2="2781" y2="1357.1" stroke="#cfcfcf" stroke-width="2"/><line x1="2768" y1="1318.3" x2="2781" y2="1318.3" stroke="#cfcfcf" stroke-width="2"/><line x1="2768" y1="1279.4" x2="2781" y2="1279.4" stroke="#cfcfcf" stroke-width="2"/><line x1="2768" y1="1240.5" x2="2781" y2="1240.5" stroke="#cfcfcf" stroke-width="2"/><line x1="2768" y1="1201.7" x2="2781" y2="1201.7" stroke="#cfcfcf" stroke-width="2"/><line x1="2768" y1="1162.8" x2="2781" y2="1162.8" stroke="#cfcfcf" stroke-width="2"/><line x1="2768" y1="1124.0" x2="2781" y2="1124.0" stroke="#cfcfcf" stroke-width="2"/><line x1="2768" y1="1085.1" x2="2781" y2="1085.1" stroke="#cfcfcf" stroke-width="2"/><line x1="2768" y1="1046.2" x2="2781" y2="1046.2" stroke="#cfcfcf" stroke-width="2"/><line x1="2768" y1="1007.4" x2="2781" y2="1007.4" stroke="#cfcfcf" stroke-width="2"/><line x1="2768" y1="968.5" x2="2781" y2="968.5" stroke="#cfcfcf" stroke-width="2"/><path d="M1133.00,971.55 C1270.33,982.21 1407.67,992.87 1545.00,992.87 C1682.17,992.87 1819.33,968.50 1956.50,968.50 C2093.83,968.50 2231.17,972.12 2368.50,979.35 C2506.00,986.60 2643.50,1062.08 2781.00,1137.56" fill="none" stroke="#c85a6a" stroke-width="2.1"/><path d="M1133.00,1137.06 C1270.33,1123.89 1407.67,1110.71 1545.00,1110.71 C1682.17,1110.71 1819.33,1396.00 1956.50,1396.00 C2093.83,1396.00 2231.17,1185.65 2368.50,1120.76 C2506.00,1055.78 2643.50,1031.18 2781.00,1006.59" fill="none" stroke="#ebab4f" stroke-width="2.1"/><path d="M1133.00,1232.02 C1270.33,1208.81 1407.67,1185.60 1545.00,1141.64 C1682.17,1097.73 1819.33,968.50 1956.50,968.50 C2093.83,968.50 2231.17,1022.05 2368.50,1078.66 C2506.00,1135.35 2643.50,1221.95 2781.00,1308.56" fill="none" stroke="#541b9b" stroke-width="2.1"/><path d="M1133.00,1295.54 C1270.33,1225.71 1407.67,1155.89 1545.00,1155.89 C1682.17,1155.89 1819.33,1396.00 1956.50,1396.00 C2093.83,1396.00 2231.17,1052.03 2368.50,1052.03 C2506.00,1052.03 2643.50,1162.80 2781.00,1273.58" fill="none" stroke="#7023a1" stroke-width="2.1"/><path d="M1133.00,1341.95 C1270.33,1343.06 1407.67,1344.17 1545.00,1348.62 C1682.17,1353.06 1819.33,1396.00 1956.50,1396.00 C2093.83,1396.00 2231.17,1046.77 2368.50,1046.77 C2506.00,1046.77 2643.50,1209.72 2781.00,1372.68" fill="none" stroke="#1d1083" stroke-width="2.1"/><path d="M1133.00,1350.20 C1270.33,1362.23 1407.67,1374.27 1545.00,1374.27 C1682.17,1374.27 1819.33,968.50 1956.50,968.50 C2093.83,968.50 2231.17,989.33 2368.50,1030.98 C2506.00,1072.69 2643.50,1152.73 2781.00,1232.77" fill="none" stroke="#912f98" stroke-width="2.1"/><path d="M1133.00,1374.62 C1270.33,1216.45 1407.67,1058.28 1545.00,1058.28 C1682.17,1058.28 1819.33,1135.53 1956.50,1182.25 C2093.83,1229.02 2231.17,1338.78 2368.50,1338.78 C2506.00,1338.78 2643.50,1222.62 2781.00,1106.47" fill="none" stroke="#d56c5e" stroke-width="2.1"/><rect x="2781" y="968.5" width="60" height="427.5" fill="url(#cb)" stroke="#cfcfcf" stroke-width="2"/><g font-family="Liberation Sans, sans-serif" font-size="19.5" fill="#55595e" text-anchor="end" stroke="#fff" stroke-width="3" stroke-linejoin="round" paint-order="stroke"><text x="1113.5" y="1403.6">50</text><text x="1113.5" y="1373.1">60</text><text x="1113.5" y="1342.5">70</text><text x="1113.5" y="1312.0">80</text><text x="1113.5" y="1281.5">90</text><text x="1113.5" y="1250.9">100</text><text x="1113.5" y="1220.4">110</text><text x="1113.5" y="1189.8">120</text><text x="1113.5" y="1159.3">130</text><text x="1113.5" y="1128.8">140</text><text x="1113.5" y="1098.2">150</text><text x="1113.5" y="1067.7">160</text><text x="1113.5" y="1037.2">170</text><text x="1113.5" y="1006.6">180</text><text x="1113.5" y="976.1">190</text><text x="1525.5" y="1403.6">0.20</text><text x="1525.5" y="1368.0">0.25</text><text x="1525.5" y="1332.3">0.30</text><text x="1525.5" y="1296.7">0.35</text><text x="1525.5" y="1261.1">0.40</text><text x="1525.5" y="1225.5">0.45</text><text x="1525.5" y="1189.8">0.50</text><text x="1525.5" y="1154.2">0.55</text><text x="1525.5" y="1118.6">0.60</text><text x="1525.5" y="1083.0">0.65</text><text x="1525.5" y="1047.3">0.70</text><text x="1525.5" y="1011.7">0.75</text><text x="1525.5" y="976.1">0.80</text><text x="1937.0" y="1403.6">1.0</text><text x="1937.0" y="1360.8">1.2</text><text x="1937.0" y="1318.1">1.4</text><text x="1937.0" y="1275.3">1.6</text><text x="1937.0" y="1232.6">1.8</text><text x="1937.0" y="1189.8">2.0</text><text x="1937.0" y="1147.1">2.2</text><text x="1937.0" y="1104.3">2.4</text><text x="1937.0" y="1061.6">2.6</text><text x="1937.0" y="1018.9">2.8</text><text x="1937.0" y="976.1">3.0</text><text x="2349.0" y="1403.6">0.00050</text><text x="2349.0" y="1370.7">0.00060</text><text x="2349.0" y="1337.8">0.00070</text><text x="2349.0" y="1304.9">0.00080</text><text x="2349.0" y="1272.1">0.00090</text><text x="2349.0" y="1239.2">0.00100</text><text x="2349.0" y="1206.3">0.00110</text><text x="2349.0" y="1173.4">0.00120</text><text x="2349.0" y="1140.5">0.00130</text><text x="2349.0" y="1107.6">0.00140</text><text x="2349.0" y="1074.8">0.00150</text><text x="2349.0" y="1041.9">0.00160</text><text x="2349.0" y="1009.0">0.00170</text><text x="2349.0" y="976.1">0.00180</text><text x="2761.5" y="1403.6">0.30</text><text x="2761.5" y="1364.7">0.32</text><text x="2761.5" y="1325.9">0.34</text><text x="2761.5" y="1287.0">0.36</text><text x="2761.5" y="1248.1">0.38</text><text x="2761.5" y="1209.3">0.40</text><text x="2761.5" y="1170.4">0.42</text><text x="2761.5" y="1131.6">0.44</text><text x="2761.5" y="1092.7">0.46</text><text x="2761.5" y="1053.8">0.48</text><text x="2761.5" y="1015.0">0.50</text><text x="2761.5" y="976.1">0.52</text></g></svg>
<div class="t" style="left:-367.5px;width:3000px;text-align:center;top:916.8px;font-size:25.0px;color:#35383c;font-weight:bold;">batch_size</div>
<div class="t" style="left:43.5px;width:3000px;text-align:center;top:916.8px;font-size:25.0px;color:#35383c;font-weight:bold;">dropout</div>
<div class="t" style="left:456.0px;width:3000px;text-align:center;top:916.8px;font-size:25.0px;color:#35383c;font-weight:bold;">epochs</div>
<div class="t" style="left:868.0px;width:3000px;text-align:center;top:916.8px;font-size:25.0px;color:#35383c;font-weight:bold;">learning_rate</div>
<div class="t" style="left:1280.0px;width:3000px;text-align:center;top:916.8px;font-size:25.0px;color:#35383c;font-weight:bold;">loss</div>
<div class="t" style="left:694.5px;top:1427.2px;font-size:24px;color:#333;font-weight:bold;">,</div>
</body></html>
